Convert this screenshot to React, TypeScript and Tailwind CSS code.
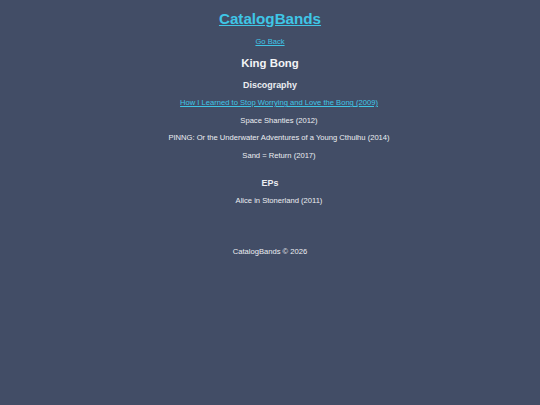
import * as React from "react";

const albums = [
  { title: "How I Learned to Stop Worrying and Love the Bong (2009)", link: true },
  { title: "Space Shanties (2012)" },
  { title: "PINNG: Or the Underwater Adventures of a Young Cthulhu (2014)" },
  { title: "Sand = Return (2017)" },
];

const eps = [{ title: "Alice in Stonerland (2011)" }];

function ReleaseList({ items }: { items: { title: string; link?: boolean }[] }) {
  return (
    <ul className="flex flex-col gap-[7.7px] pl-[18px]">
      {items.map((item) => (
        <li key={item.title} className="text-[7.6px] leading-[10px]">
          {item.link ? (
            <a href="#" className="text-[#3fc6e6] underline">
              {item.title}
            </a>
          ) : (
            <span className="text-[#eceef2]">{item.title}</span>
          )}
        </li>
      ))}
    </ul>
  );
}

export default function App() {
  return (
    <div className="min-h-[405px] w-full bg-[#424d66] text-center text-white font-['Liberation_Sans',Arial,sans-serif]">
      <header className="pt-[10px]">
        <h1 className="text-[15.2px] leading-[18px] font-bold">
          <a href="#" className="text-[#3fc6e6] underline">
            CatalogBands
          </a>
        </h1>
      </header>

      <main className="flex flex-col items-center">
        <a href="#" className="mt-[9px] text-[7.6px] leading-[10px] text-[#3fc6e6] underline">
          Go Back
        </a>
        <h2 className="mt-[9px] text-[11.4px] leading-[14px] font-bold text-[#f3f4f6]">King Bong</h2>

        <section className="flex flex-col items-center">
          <h3 className="mt-[9px] mb-[7px] text-[8.9px] leading-[12px] font-bold text-[#eceef2]">Discography</h3>
          <ReleaseList items={albums} />
        </section>

        <section className="flex flex-col items-center">
          <h3 className="mt-[16px] mb-[7px] text-[8.9px] leading-[12px] font-bold text-[#eceef2]">EPs</h3>
          <ReleaseList items={eps} />
        </section>
      </main>

      <footer className="mt-[41px] text-[7.6px] leading-[10px] text-[#eceef2]">CatalogBands © 2026</footer>
    </div>
  );
}
